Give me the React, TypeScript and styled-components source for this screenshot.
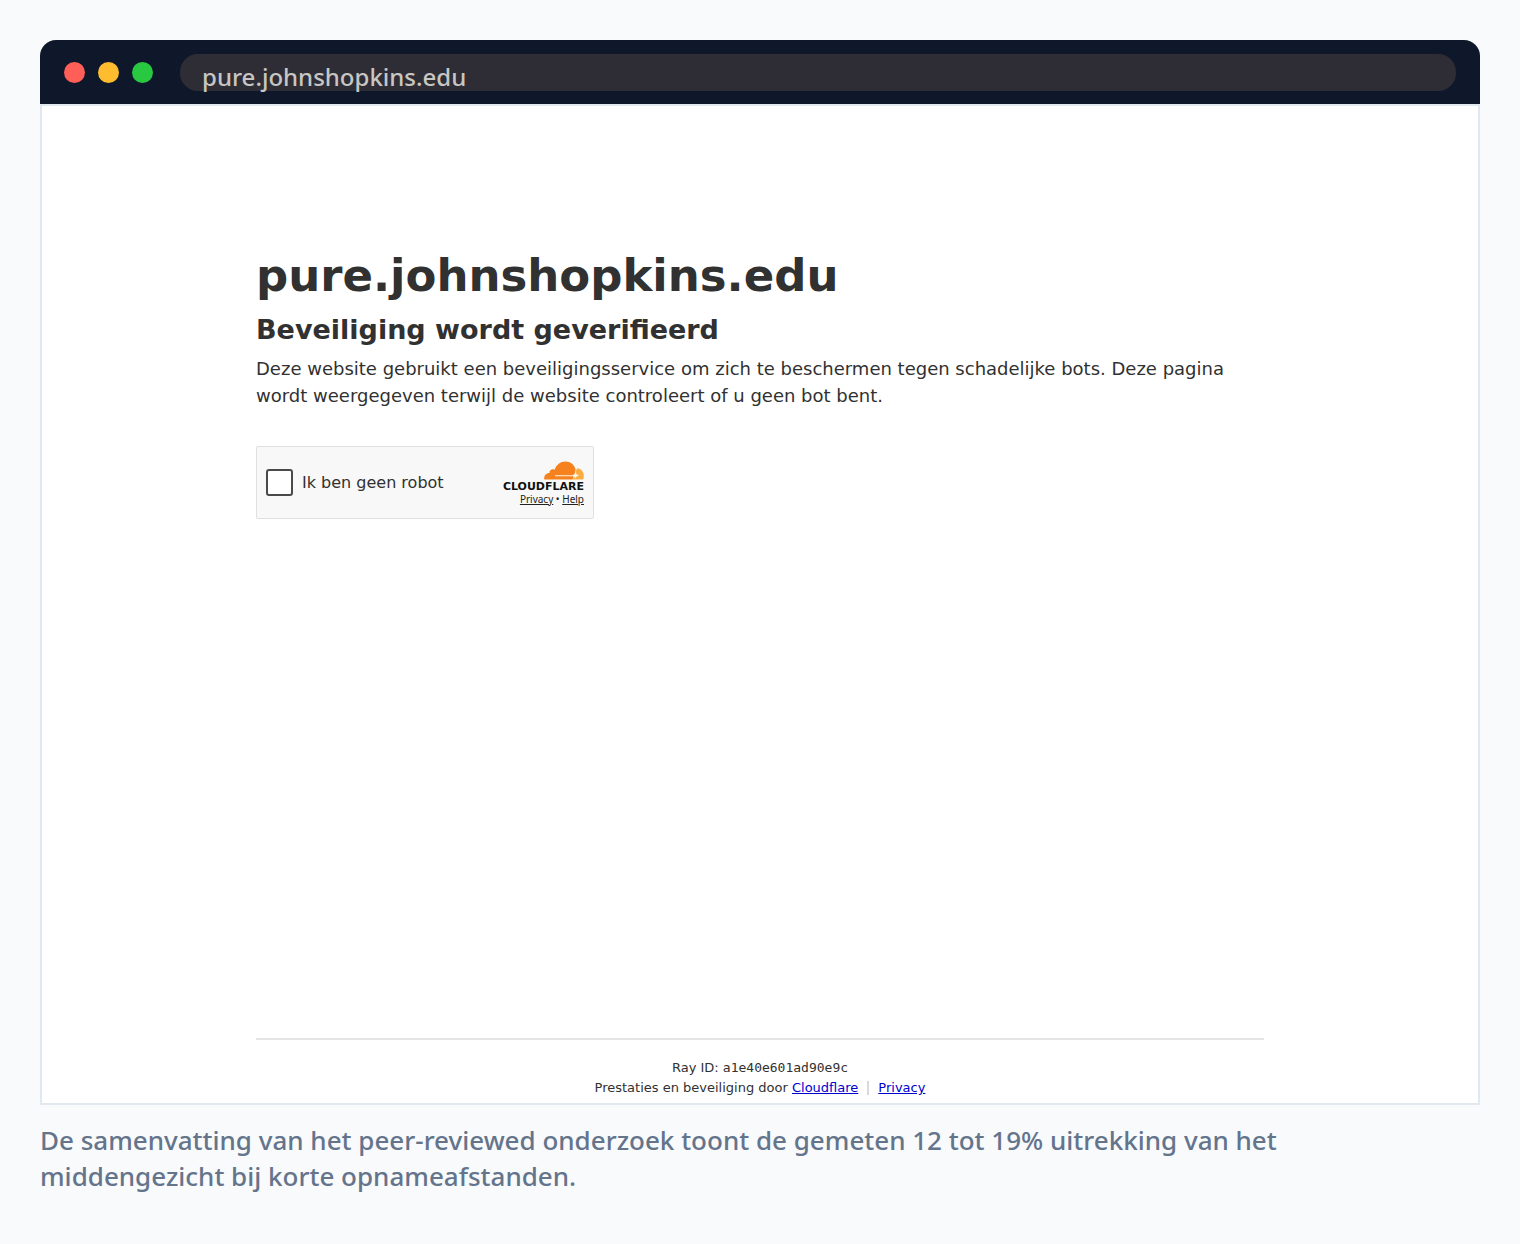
import React from "react";
import styled, { createGlobalStyle } from "styled-components";

const GlobalStyle = createGlobalStyle`
  *, *::before, *::after { box-sizing: border-box; }
  body { margin: 0; background: #f8fafc; }
`;

const ui = `"Noto Sans", "Open Sans", sans-serif`;
const system = `"DejaVu Sans", Verdana, sans-serif`;

const Page = styled.div`
  display: flex;
  flex-direction: column;
  min-height: 100vh;
  padding: 40px 40px 50px;
  font-family: ${ui};
`;

const Browser = styled.figure`
  flex: 1;
  display: flex;
  flex-direction: column;
  margin: 0;
`;

const TitleBar = styled.div`
  display: flex;
  align-items: center;
  height: 64px;
  padding: 0 24px;
  gap: 27px;
  background: #0f172a;
  border-radius: 16px 16px 0 0;
`;

const Lights = styled.div`
  display: flex;
  gap: 13px;
`;

const Light = styled.span<{ $color: string }>`
  width: 21px;
  height: 21px;
  border-radius: 50%;
  background: ${(p) => p.$color};
`;

const AddressBar = styled.div`
  flex: 1;
  display: flex;
  align-items: flex-start;
  height: 37px;
  padding: 0 22px;
  border-radius: 18px;
  background: #2e2d36;
`;

const Address = styled.input`
  flex: 1;
  min-width: 0;
  height: 45px;
  padding: 0;
  border: 0;
  outline: 0;
  background: transparent;
  color: #c8c6c2;
  font: 500 24px ${ui};
`;

const Viewport = styled.div`
  flex: 1;
  display: flex;
  flex-direction: column;
  background: #fff;
  border: 2px solid #e2e8f0;
  color: #313131;
  font-family: ${system};
`;

const Main = styled.main`
  flex: 1;
  width: 100%;
  max-width: 1080px;
  margin: 0 auto;
  padding: 144px 36px 36px;
`;

const Host = styled.h1`
  margin: 0;
  font-size: 45px;
  line-height: 52px;
`;

const Heading = styled.h2`
  margin: 10px 0 7px;
  font-size: 27px;
  line-height: 36px;
`;

const Text = styled.p`
  margin: 0 0 37px;
  font-size: 18px;
  line-height: 27px;
`;

const Widget = styled.div`
  display: flex;
  align-items: center;
  justify-content: space-between;
  width: 338px;
  height: 73px;
  padding: 0 9px;
  border: 1px solid #e0e0e0;
  border-radius: 2px;
  background: #f8f8f8;
`;

const CheckLabel = styled.label`
  display: flex;
  align-items: center;
  gap: 9px;
  font-size: 16px;
`;

const Check = styled.input`
  appearance: none;
  width: 27px;
  height: 27px;
  margin: 0;
  border: 2px solid #4a4a4a;
  border-radius: 3px;
  background: #fff;
`;

const Brand = styled.div`
  display: flex;
  flex-direction: column;
  align-items: flex-end;
  color: #222;
`;

const Cloud = styled.svg`
  width: 40px;
  height: 19px;
`;

const BrandName = styled.span`
  font: 700 11px/13px ${system};
  color: #111;
`;

const BrandLinks = styled.span`
  font: 10px/12px ${ui};
`;

const WidgetLink = styled.a`
  color: inherit;
`;

const Footer = styled.footer`
  width: 100%;
  max-width: 1080px;
  margin: 0 auto;
  padding: 0 36px;
  font-size: 13px;
  line-height: 20px;
  text-align: center;
`;

const FooterInner = styled.div`
  padding: 18px 0 5px;
  border-top: 2px solid #e5e5e5;
`;

const RayId = styled.code`
  font-family: "DejaVu Sans Mono", monospace;
`;

const Divided = styled.span`
  display: inline-block;
  margin-left: 9px;
  padding-left: 9px;
  line-height: 14px;
  border-left: 2px solid #d9d9d9;
`;

const FooterLink = styled.a`
  color: #0000d0;
`;

const Caption = styled.figcaption`
  max-width: 1400px;
  margin-top: 17px;
  color: #64748b;
  font-size: 26px;
  font-weight: 500;
  line-height: 36px;
`;

const lights = ["#ff5f57", "#febc2e", "#28c840"];

export default function App() {
  return (
    <Page>
      <GlobalStyle />
      <Browser>
        <TitleBar>
          <Lights>
            {lights.map((c) => (
              <Light key={c} $color={c} />
            ))}
          </Lights>
          <AddressBar>
            <Address aria-label="Adres" readOnly value="pure.johnshopkins.edu" />
          </AddressBar>
        </TitleBar>
        <Viewport>
          <Main>
            <Host>pure.johnshopkins.edu</Host>
            <Heading>Beveiliging wordt geverifieerd</Heading>
            <Text>
              Deze website gebruikt een beveiligingsservice om zich te beschermen tegen schadelijke bots. Deze pagina
              wordt weergegeven terwijl de website controleert of u geen bot bent.
            </Text>
            <Widget>
              <CheckLabel htmlFor="robot">
                <Check id="robot" type="checkbox" />
                Ik ben geen robot
              </CheckLabel>
              <Brand>
                <Cloud viewBox="0 0 40 19" aria-hidden="true">
                  <path
                    d="M29 18.5 L31.4 13 C31.8 10 32.4 7.4 34 7.2 C37.5 8 39.8 11 39.8 14.5 C39.8 16 39.6 18 39 18.5 Z"
                    fill="#fbad41"
                  />
                  <path
                    d="M0.3 18.5 C-0.4 15 2 12 5.5 12 C5 9.3 8 7.3 10.6 8.8 C12.3 3.6 16.6 0.5 21.3 0.5 C26.6 0.5 30.6 4 31.6 8.6 C31.4 10 31 12 30.4 14 L28.6 18.5 Z"
                    fill="#f6821f"
                  />
                  <path
                    d="M11 14.2 H28 C30 14 30.8 13 31.5 11 C32 13 33 14 35.5 14.6 C33 15 32 15.8 31.4 17.4 C30.6 15.8 29.4 15.2 27.5 15.2 H11 Z"
                    fill="#fff3e4"
                  />
                </Cloud>
                <BrandName>CLOUDFLARE</BrandName>
                <BrandLinks>
                  <WidgetLink href="#privacy">Privacy</WidgetLink> • <WidgetLink href="#help">Help</WidgetLink>
                </BrandLinks>
              </Brand>
            </Widget>
          </Main>
          <Footer>
            <FooterInner>
              <div>
                Ray ID: <RayId>a1e40e601ad90e9c</RayId>
              </div>
              <div>
                Prestaties en beveiliging door <FooterLink href="#cloudflare">Cloudflare</FooterLink>
                <Divided>
                  <FooterLink href="#privacy">Privacy</FooterLink>
                </Divided>
              </div>
            </FooterInner>
          </Footer>
        </Viewport>
        <Caption>
          De samenvatting van het peer-reviewed onderzoek toont de gemeten 12 tot 19% uitrekking van het middengezicht
          bij korte opnameafstanden.
        </Caption>
      </Browser>
    </Page>
  );
}
